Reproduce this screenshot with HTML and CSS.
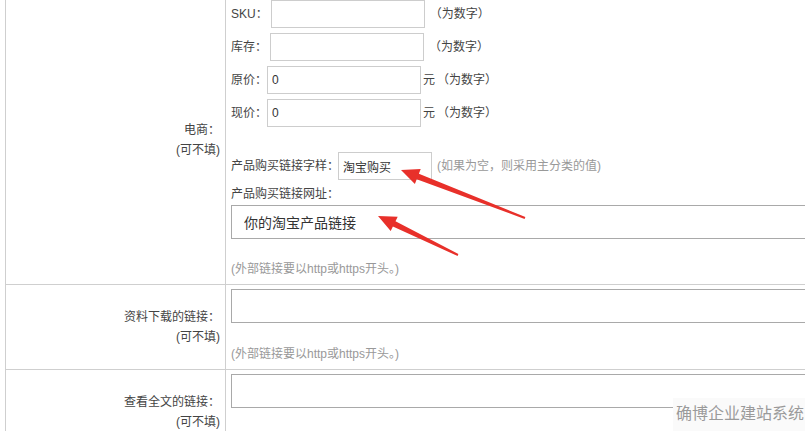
FILE: index.html
```html
<!DOCTYPE html>
<html lang="zh-CN">
<head>
<meta charset="utf-8">
<title>电商</title>
<link rel="stylesheet" href="styles.css">
</head>
<body>
<div class="page">
  <div class="form">
    <div class="row">
      <div class="label"><span>电商：</span><span>(可不填)</span></div>
      <div class="field">
        <div class="line"><span>SKU：</span><input class="small m3" type="text" value=""><span class="note wide-gap">（为数字）</span></div>
        <div class="line"><span>库存：</span><input class="small m3" type="text" value=""><span class="note wide-gap">（为数字）</span></div>
        <div class="line"><span>原价：</span><input class="small" type="text" value="0"><span class="unit">元</span><span class="note">（为数字）</span></div>
        <div class="line"><span>现价：</span><input class="small" type="text" value="0"><span class="unit">元</span><span class="note">（为数字）</span></div>
        <div class="line buy"><span>产品购买链接字样：</span><input class="small word" type="text" value="淘宝购买"><span class="tip">(如果为空，则采用主分类的值)</span></div>
        <div class="urllabel">产品购买链接网址：</div>
        <input class="wide first" type="text" value="你的淘宝产品链接">
        <div class="hint">(外部链接要以http或https开头。)</div>
      </div>
    </div>
    <div class="row">
      <div class="label"><span>资料下载的链接：</span><span>(可不填)</span></div>
      <div class="field">
        <input class="wide" type="text" value="">
        <div class="hint lower">(外部链接要以http或https开头。)</div>
      </div>
    </div>
    <div class="row">
      <div class="label"><span>查看全文的链接：</span><span>(可不填)</span></div>
      <div class="field last">
        <input class="wide" type="text" value="">
      </div>
    </div>
  </div>
  <svg class="arrows" width="805" height="431" viewBox="0 0 805 431">
    <polygon points="401,170 420.7,169 418.9,173.7 525.4,217.1 524.6,218.9 416.7,179.3 414.9,184" fill="#e8302a"/>
    <polygon points="378,216 397.7,216.7 395.5,221.2 458.4,254.1 457.6,255.9 392.9,226.6 390.7,231.1" fill="#e8302a"/>
  </svg>
  <div class="watermark">确博企业建站系统</div>
</div>
</body>
</html>
```
FILE: styles.css
```css
* { box-sizing: border-box; }
body {
  margin: 0;
  background: #fff;
  font-family: "Liberation Sans", "Noto Sans CJK SC", sans-serif;
  font-size: 12px;
  line-height: 20px;
  color: #444;
  overflow: hidden;
}
.page {
  position: relative;
  width: 805px;
  height: 431px;
  overflow: hidden;
}
.form {
  margin-top: -5px;
  margin-left: 5px;
  width: 900px;
  border-left: 1px solid #cfcfcf;
}
.row {
  display: grid;
  grid-template-columns: 219px 1fr;
  border-top: 1px solid #cfcfcf;
}
.label {
  display: flex;
  flex-direction: column;
  justify-content: center;
  align-items: flex-end;
  padding-right: 5px;
}
.field {
  border-left: 1px solid #cfcfcf;
  padding: 4px 0 5px 5px;
}
.field.last { padding-bottom: 46px; }
.line {
  display: flex;
  align-items: center;
  height: 28px;
  margin-bottom: 5px;
}
.line.buy { margin-top: 25px; margin-bottom: 0; }
input {
  font-family: inherit;
  margin: 0;
  outline: none;
  background: #fff;
}
.small {
  width: 154px;
  height: 28px;
  border: 1px solid #cdcdcd;
  padding: 0 4px;
  font-size: 12px;
  color: #333;
}
.small.m3 { margin-left: 3px; }
.small.word { width: 94px; margin-left: -1px; }
.unit { margin-left: 2px; }
.note { margin-left: 2px; }
.note.wide-gap { margin-left: 5px; }
.tip { margin-left: 5px; color: #999; }
.urllabel {
  margin-top: 5px;
  line-height: 18px;
}
.wide {
  display: block;
  width: 600px;
  height: 34px;
  border: 1px solid #a9a9a9;
  padding: 0 12px;
  font-size: 14px;
  color: #333;
}
.wide.first { margin-top: 2px; }
.hint {
  margin-top: 20px;
  line-height: 20px;
  color: #999;
}
.hint.lower { margin-top: 21px; }
.arrows {
  position: absolute;
  left: 0;
  top: 0;
  pointer-events: none;
}
.watermark {
  position: absolute;
  right: 0;
  bottom: 0;
  width: 132px;
  height: 33px;
  padding-left: 3px;
  background: #fafafa;
  color: #9a9a9a;
  font-size: 16px;
  line-height: 31px;
  white-space: nowrap;
}
```
